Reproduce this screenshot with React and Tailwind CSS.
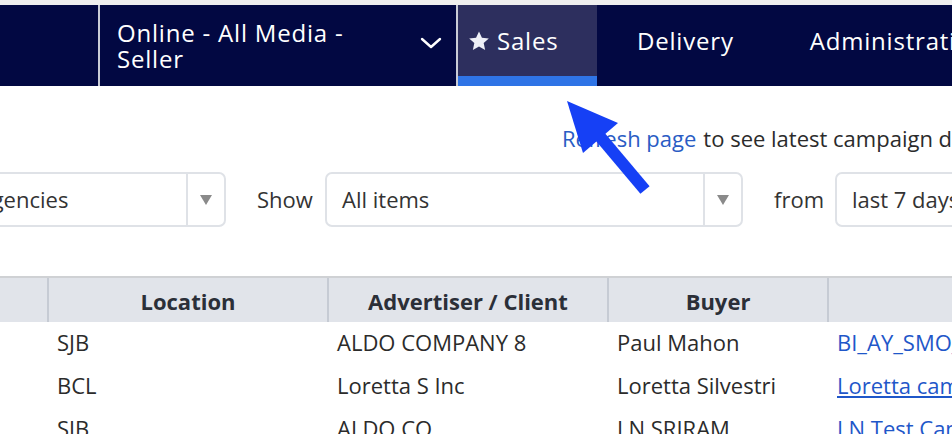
import React from 'react';

const rows = [
    { location: 'SJB', advertiser: 'ALDO COMPANY 8', buyer: 'Paul Mahon', campaign: 'BI_AY_SMO_Campaign', underline: false },
    { location: 'BCL', advertiser: 'Loretta S Inc', buyer: 'Loretta Silvestri', campaign: 'Loretta campaign', underline: true },
    { location: 'SJB', advertiser: 'ALDO CO', buyer: 'LN SRIRAM', campaign: 'LN Test Campaign', underline: true },
];

const Caret = () => (
    <svg width="12" height="10" viewBox="0 0 12 10" className="shrink-0">
        <path d="M0 0 H12 L6 10 Z" fill="#8a8a8a" />
    </svg>
);

const Select = ({ value, className }) => (
    <div className={`flex h-[55px] shrink-0 items-stretch rounded-[7px] border-2 border-[#dfe2e7] bg-white ${className}`}>
        <div className="flex flex-1 items-center overflow-hidden whitespace-nowrap pl-[15px] text-[#333]">{value}</div>
        <div className="flex w-[38px] items-center justify-center border-l-2 border-[#dfe2e7]">
            <Caret />
        </div>
    </div>
);

export default function App() {
    return (
        <div className="relative h-[434px] w-[952px] overflow-hidden bg-white text-[22px]" style={{ fontFamily: '"Open Sans", "Noto Sans", sans-serif' }}>
            {/* top nav */}
            <div className="h-[5px] bg-[#efefef]" />
            <div className="flex h-[81px] whitespace-nowrap bg-[#020842] text-[24px] font-medium tracking-[0.8px] text-white">
                <div className="w-[98px] shrink-0" />
                <div className="w-[2px] shrink-0 bg-[#c9ccd6]" />
                <div className="flex w-[356px] shrink-0 items-center justify-between pl-[17px] pr-[14px]">
                    <div className="leading-[26px]">
                        Online - All Media -<br />Seller
                    </div>
                    <svg width="22" height="14" viewBox="0 0 22 14" fill="none" stroke="white" strokeWidth="2.4" strokeLinecap="round" strokeLinejoin="round" className="mb-[6px]">
                        <path d="M2 3 L11 11 L20 3" />
                    </svg>
                </div>
                <div className="w-[2px] shrink-0 bg-[#c9ccd6]" />
                <div className="flex w-[139px] shrink-0 flex-col bg-[#2d2f5e]">
                    <div className="flex flex-1 items-center gap-[7px] pl-[10px]">
                        <svg width="22" height="22" viewBox="0 0 24 24" fill="#eef0f7">
                            <path d="M12 1.5l3.2 6.9 7.5.8-5.6 5.1 1.6 7.4L12 17.9l-6.7 3.8 1.6-7.4L1.3 9.2l7.5-.8z" />
                        </svg>
                        Sales
                    </div>
                    <div className="h-[10px] bg-[#2f74e6]" />
                </div>
                <div className="flex shrink-0 items-center pb-[10px] pl-[40px]">Delivery</div>
                <div className="flex shrink-0 items-center pb-[10px] pl-[76px]">Administration</div>
            </div>

            {/* refresh line */}
            <div className="flex h-[86px] items-center whitespace-nowrap pl-[562px] pt-[18px] text-[#2b2b2b]">
                <span className="shrink-0 text-[#2a5cc4]">Refresh page</span>
                <span className="ml-[7px] shrink-0">to see latest campaign data</span>
            </div>

            {/* filters */}
            <div className="flex h-[55px] items-center whitespace-nowrap text-[#333]">
                <Select value="All Agencies" className="-ml-[70px] w-[296px]" />
                <span className="ml-[31px] w-[58px] shrink-0">Show</span>
                <Select value="All items" className="ml-[10px] w-[418px]" />
                <span className="ml-[31px] w-[50px] shrink-0">from</span>
                <Select value="last 7 days" className="ml-[11px] w-[200px]" />
            </div>

            {/* table */}
            <div className="mt-[49px] border-t-2 border-[#cfd1d4]">
                <div className="grid grid-cols-[49px_280px_280px_220px_300px] bg-[#e1e4ea] font-bold text-[#2b2f38]">
                    <div className="h-[44px] border-r-2 border-[#c6cbd4]" />
                    <div className="flex h-[44px] items-center justify-center border-r-2 border-[#c6cbd4] pt-[3px]">Location</div>
                    <div className="flex h-[44px] items-center justify-center border-r-2 border-[#c6cbd4] pt-[3px]">Advertiser / Client</div>
                    <div className="flex h-[44px] items-center justify-center border-r-2 border-[#c6cbd4] pt-[3px]">Buyer</div>
                    <div className="h-[44px]" />
                </div>
                {rows.map((r, i) => (
                    <div key={i} className="grid h-[43px] grid-cols-[49px_280px_280px_220px_300px] items-center whitespace-nowrap pb-[2px] text-[#2b2b2b]">
                        <div />
                        <div className="pl-[8px]">{r.location}</div>
                        <div className="pl-[8px]">{r.advertiser}</div>
                        <div className="pl-[8px]">{r.buyer}</div>
                        <div className={`pl-[8px] text-[#1f57c9] ${r.underline ? 'underline' : ''}`}>{r.campaign}</div>
                    </div>
                ))}
            </div>

            {/* annotation arrow */}
            <svg className="pointer-events-none absolute left-0 top-0" width="952" height="434" viewBox="0 0 952 434">
                <line x1="645" y1="190" x2="597" y2="133" stroke="#1640f5" strokeWidth="12" />
                <polygon points="567,101 618,123 583,153" fill="#1640f5" />
            </svg>
        </div>
    );
}
